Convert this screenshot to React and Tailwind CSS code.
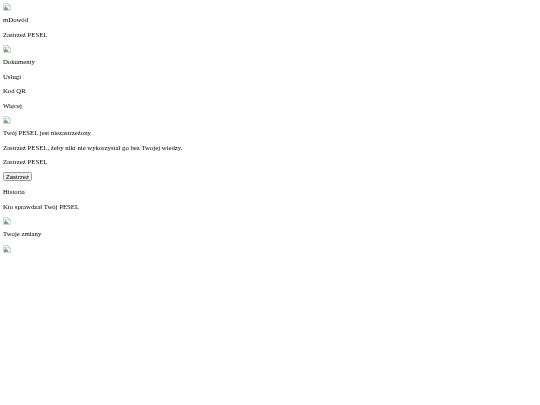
import React from 'react';

const BrokenImage = () => (
  <svg width="8" height="8" viewBox="0 0 16 16" className="block">
    <path d="M1 1h9l5 5v9H1z" fill="#fff" stroke="#b8b8b8" strokeWidth="1.2" />
    <path d="M10 1v5h5" fill="#e4e4e4" stroke="#b8b8b8" strokeWidth="1.2" />
    <path d="M2 14V10l3-3 4 3 3 4z" fill="#6fb06c" />
    <path d="M3 4h4v3H3z" fill="#a0c2ee" />
  </svg>
);

const Line = ({ children }) => <p className="my-[6.75px] leading-[7.65px]">{children}</p>;

const Pic = () => <div className="my-[6.75px] h-[6.5px]"><BrokenImage /></div>;

const App = () => {
  return (
    <div className="flow-root min-h-[405px] bg-white px-[3px] text-[6.75px] text-black font-['Liberation_Serif',serif]">
      <div className="-mt-[3.75px] blur-[0.4px]">
        <Pic />
        <Line>mDowód</Line>
        <Line>Zastrzeż PESEL</Line>
        <Pic />
        <Line>Dokumenty</Line>
        <Line>Usługi</Line>
        <Line>Kod QR</Line>
        <Line>Więcej</Line>
        <Pic />
        <Line>Twój PESEL jest niezastrzeżony</Line>
        <Line>Zastrzeż PESEL, żeby nikt nie wykorzystał go bez Twojej wiedzy.</Line>
        <Line>Zastrzeż PESEL</Line>
        <button className="block h-[9px] w-[29px] border border-[#a0a0a0] bg-[#efefef] rounded-[1.5px] text-[6px] leading-none text-black font-['Liberation_Sans',sans-serif]">Zastrzeż</button>
        <Line>Historia</Line>
        <Line>Kto sprawdzał Twój PESEL</Line>
        <Pic />
        <Line>Twoje zmiany</Line>
        <Pic />
      </div>
    </div>
  );
};

export default App;
